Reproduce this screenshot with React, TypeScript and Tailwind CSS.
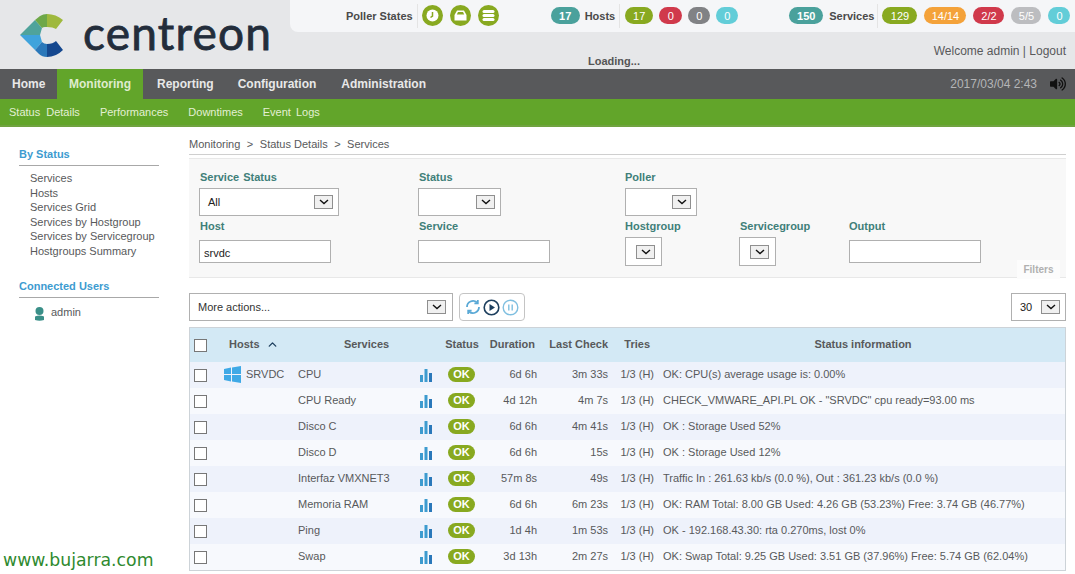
import { ChevronUp } from "lucide-react";
import { FaVolumeUp } from "react-icons/fa";

const rows = [
  { service: "CPU", duration: "6d 6h", check: "3m 33s", info: "OK: CPU(s) average usage is: 0.00%", host: true },
  { service: "CPU Ready", duration: "4d 12h", check: "4m 7s", info: 'CHECK_VMWARE_API.PL OK - "SRVDC" cpu ready=93.00 ms' },
  { service: "Disco C", duration: "6d 6h", check: "4m 41s", info: "OK : Storage Used 52%" },
  { service: "Disco D", duration: "6d 6h", check: "15s", info: "OK : Storage Used 12%" },
  { service: "Interfaz VMXNET3", duration: "57m 8s", check: "49s", info: "Traffic In : 261.63 kb/s (0.0 %), Out : 361.23 kb/s (0.0 %)" },
  { service: "Memoria RAM", duration: "6d 6h", check: "6m 23s", info: "OK: RAM Total: 8.00 GB Used: 4.26 GB (53.23%) Free: 3.74 GB (46.77%)" },
  { service: "Ping", duration: "1d 4h", check: "1m 53s", info: "OK - 192.168.43.30: rta 0.270ms, lost 0%" },
  { service: "Swap", duration: "3d 13h", check: "2m 27s", info: "OK: Swap Total: 9.25 GB Used: 3.51 GB (37.96%) Free: 5.74 GB (62.04%)" },
];

function Logo() {
  return (
    <svg width="44" height="44" viewBox="0 0 44 44" className="shrink-0">
      <path d="M0 21 L15 6 L22 14 L20 21 Z" fill="#4fa39b" />
      <path d="M15 6 L20 2 Q23 0 27 0 L27 13 L25 13 Q23 13 22 14 Z" fill="#6ea848" />
      <path d="M27 0 Q36 0 43 6 L36 15 Q33 13 27 13 Z" fill="#9fb93d" />
      <path d="M0 21 L20 21 L22 28 L15 36 Z" fill="#3fa3dc" />
      <path d="M15 36 L22 28 Q24 30 27 30 L27 43 Q22 43 19 40 Z" fill="#2a78ba" />
      <path d="M27 30 Q33 30 36 27 L43 36 Q36 43 27 43 Z" fill="#15488f" />
    </svg>
  );
}

function Round({ children }: { children: React.ReactNode }) {
  return <span className="flex h-[21px] w-[21px] items-center justify-center rounded-full bg-[#88a920]">{children}</span>;
}

function Pill({ color, w, bold, children }: { color: string; w: string; bold?: boolean; children: React.ReactNode }) {
  return <span className={`flex h-[17px] items-center justify-center rounded-full text-[11px] text-white ${bold ? "font-bold" : "font-normal"} ${color} ${w}`}>{children}</span>;
}

function SelectBox({ className, value }: { className: string; value?: string }) {
  return (
    <div className={`flex items-center justify-between border border-[#b0b0b0] bg-white text-[11px] font-normal text-[#222] ${className}`}>
      <span>{value}</span>
      <span className="flex h-[14px] w-[19px] items-center justify-center border border-[#8f8f8f] bg-[#f0f0f0]">
        <svg width="10" height="6" viewBox="0 0 10 6"><path d="M1 1 L5 4.5 L9 1" fill="none" stroke="#111" strokeWidth="1.4" /></svg>
      </span>
    </div>
  );
}

function Bars() {
  return (
    <svg width="12" height="13" viewBox="0 0 12 13">
      <rect x="0" y="6" width="3" height="7" fill="#3d9bcf" />
      <rect x="4.5" y="0" width="3" height="13" fill="#3d9bcf" />
      <rect x="9" y="4" width="3" height="9" fill="#2a78ba" />
    </svg>
  );
}

function WinIcon() {
  return (
    <svg width="17" height="17" viewBox="0 0 17 17">
      <path d="M0 3 L7 1.6 V8 H0 Z M8 1.4 L17 0 V8 H8 Z M0 9 H7 V15.4 L0 14 Z M8 9 H17 V17 L8 15.6 Z" fill="#3fa9e6" />
    </svg>
  );
}

function Check() {
  return <span className="block h-[13px] w-[13px] border border-[#777] bg-white" />;
}

export default function App() {
  return (
    <div className="relative h-[574px] w-[1075px] overflow-hidden bg-white font-['Liberation_Sans',Arial,sans-serif] text-[11px] text-[#58595b]">
      {/* cabecera */}
      <header className="flex h-[69px] bg-[#e6e7e9]">
        <div className="flex w-[290px] shrink-0 items-start gap-[19px] pl-[20px] pt-[14px]">
          <Logo />
          <span className="mt-[-4px] font-['Lato',sans-serif] text-[46px] font-normal leading-[46px] tracking-[1.2px] text-[#232d3b] [-webkit-text-stroke:0.8px_#232d3b]">centreon</span>
        </div>
        <div className="flex min-w-0 flex-1 flex-col">
          <div className="flex h-[33px] items-center rounded-bl-lg bg-[#f5f6f8] pl-[56px] font-bold">
            <span className="text-[#4a4a4a]">Poller States</span>
            <span className="ml-[4px] h-[24px] w-px bg-[#e4e4e4]" />
            <div className="ml-[4px] flex gap-[7px]">
              <Round>
                <svg width="13" height="13" viewBox="0 0 13 13"><circle cx="6.5" cy="6.5" r="6" fill="#fff" /><path d="M6.5 3 V7 L4.5 8.5" fill="none" stroke="#88a920" strokeWidth="1.5" /></svg>
              </Round>
              <Round>
                <svg width="13" height="11" viewBox="0 0 13 11"><path d="M3 .5 H10 L12.5 5 V10.5 H.5 V5 Z" fill="#fff" /><path d="M4 2 H9 L10.2 4.6 H2.8 Z" fill="#88a920" /></svg>
              </Round>
              <Round>
                <svg width="13" height="13" viewBox="0 0 13 13"><rect x=".5" y="1" width="12" height="3" rx="1.5" fill="#fff" /><rect x=".5" y="5" width="12" height="3" rx="1.5" fill="#fff" /><rect x=".5" y="9" width="12" height="3" rx="1.5" fill="#fff" /></svg>
              </Round>
            </div>
            <div className="ml-[52px] flex items-center">
              <Pill bold color="bg-[#4aa19c]" w="w-[29px]">17</Pill>
              <span className="ml-[5px] text-[#4a4a4a]">Hosts</span>
              <span className="ml-[4px] h-[24px] w-px bg-[#e4e4e4]" />
              <div className="ml-[5px] flex gap-[6px]">
                <Pill color="bg-[#88a920]" w="w-[28px]">17</Pill>
                <Pill color="bg-[#d0394b]" w="w-[23px]">0</Pill>
                <Pill color="bg-[#818285]" w="w-[22px]">0</Pill>
                <Pill color="bg-[#62cdd8]" w="w-[22px]">0</Pill>
              </div>
            </div>
            <div className="ml-[51px] flex items-center">
              <Pill bold color="bg-[#4aa19c]" w="w-[34px]">150</Pill>
              <span className="ml-[6px] text-[#4a4a4a]">Services</span>
              <span className="ml-[3px] h-[24px] w-px bg-[#e4e4e4]" />
              <div className="ml-[4px] flex gap-[7px]">
                <Pill color="bg-[#88a920]" w="w-[35px]">129</Pill>
                <Pill color="bg-[#f4a23a]" w="w-[42px]">14/14</Pill>
                <Pill color="bg-[#d0394b]" w="w-[31px]">2/2</Pill>
                <Pill color="bg-[#bcbdc0]" w="w-[30px]">5/5</Pill>
                <Pill color="bg-[#62cdd8]" w="w-[22px]">0</Pill>
              </div>
            </div>
          </div>
          <div className="flex flex-1 justify-between pl-[298px] pr-[9px] text-[12px]">
            <span className="mt-[21px] text-[11px] font-bold text-[#555]">Loading...</span>
            <span className="mt-[10px]">Welcome admin | Logout</span>
          </div>
        </div>
      </header>

      {/* menu principal */}
      <nav className="flex h-[30px] items-stretch bg-[#58595b] text-[12px] font-bold text-[#e8e8e8]">
        <span className="flex w-[57px] items-center pl-[12px]">Home</span>
        <span className="flex w-[86px] items-center justify-center bg-[#62a52a] text-[#dfeccf]">Monitoring</span>
        <span className="ml-[14px] flex items-center">Reporting</span>
        <span className="ml-[24px] flex items-center">Configuration</span>
        <span className="ml-[25px] flex items-center">Administration</span>
        <span className="ml-auto flex items-center pr-[9px] font-normal text-[#b4b5b7]">
          2017/03/04 2:43
          <FaVolumeUp className="ml-[13px] text-[16px] text-[#111]" />
        </span>
      </nav>
      <div className="flex h-[28px] items-center gap-[20px] border-b-2 border-[#70a340] bg-[#62a52a] pl-[9px] text-[11px] text-[#e4f0d4]">
        <span className="[word-spacing:3px]">Status Details</span>
        <span>Performances</span>
        <span>Downtimes</span>
        <span className="[word-spacing:2px]">Event Logs</span>
      </div>

      <div className="flex">
        {/* lateral */}
        <aside className="w-[189px] shrink-0 pl-[19px] pr-[30px] pt-[21px]">
          <h3 className="border-b border-[#a8a8a8] pb-[4px] font-bold leading-[13px] text-[#3d9bd0]">By Status</h3>
          <ul className="mt-[5px] pl-[11px] leading-[14.6px]">
            <li>Services</li>
            <li>Hosts</li>
            <li>Services Grid</li>
            <li>Services by Hostgroup</li>
            <li>Services by Servicegroup</li>
            <li>Hostgroups Summary</li>
          </ul>
          <h3 className="mt-[21px] border-b border-[#a8a8a8] pb-[4px] font-bold leading-[13px] text-[#3d9bd0]">Connected Users</h3>
          <div className="mt-[6px] flex items-center gap-[6px] pl-[15px]">
            <svg width="11" height="14" viewBox="0 0 11 14" className="mt-[3px]"><circle cx="5.5" cy="4" r="4" fill="#3a8f88" /><path d="M1 9.5 Q5.5 7.5 10 9.5 V13 Q5.5 14.5 1 13 Z" fill="#3a8f88" /></svg>
            <span>admin</span>
          </div>
        </aside>

        {/* contenido */}
        <main className="w-[877px] shrink-0">
          <div className="flex h-[28px] items-end gap-[6.5px] border-b border-[#cfcfcf] pb-[2px]">
            <span>Monitoring</span>
            <span>&gt;</span>
            <span>Status Details</span>
            <span>&gt;</span>
            <span>Services</span>
          </div>

          <section className="relative mt-[3px] h-[120px] border-y border-y-[#e8e8e8] bg-[#f8f8f8] pl-[10px] pt-[12px]">
            <div className="grid grid-cols-[219px_207px_114px_110px_1fr] font-bold text-[#3f7f79]">
              <div className="h-[47px]">
                <div className="pl-[1px] leading-[13px] [word-spacing:1px]">Service Status</div>
                <SelectBox className="mt-[4px] h-[28px] w-[140px] pl-[8px] pr-[5px]" value="All" />
              </div>
              <div>
                <div className="pl-[1px] leading-[13px]">Status</div>
                <SelectBox className="mt-[4px] h-[28px] w-[83px] pl-[8px] pr-[5px]" />
              </div>
              <div className="col-span-3">
                <div className="leading-[13px]">Poller</div>
                <SelectBox className="mt-[4px] h-[28px] w-[72px] pl-[8px] pr-[5px]" />
              </div>
              <div className="mt-[2px]">
                <div className="pl-[1px] leading-[13px]">Host</div>
                <input readOnly value="srvdc" className="mt-[7px] h-[23px] w-[132px] border border-[#b0b0b0] bg-white px-[4px] pt-[2px] text-[11px] font-normal text-[#222]" />
              </div>
              <div className="mt-[2px]">
                <div className="pl-[1px] leading-[13px]">Service</div>
                <input readOnly className="mt-[7px] h-[23px] w-[132px] border border-[#b0b0b0] bg-white" />
              </div>
              <div className="mt-[2px]">
                <div className="leading-[13px]">Hostgroup</div>
                <SelectBox className="mt-[4px] h-[29px] w-[37px] justify-end pr-[6px]" />
              </div>
              <div className="mt-[2px]">
                <div className="pl-[1px] leading-[13px]">Servicegroup</div>
                <SelectBox className="mt-[4px] h-[29px] w-[37px] justify-end pr-[6px]" />
              </div>
              <div className="mt-[2px]">
                <div className="leading-[13px]">Output</div>
                <input readOnly className="mt-[7px] h-[23px] w-[132px] border border-[#b0b0b0] bg-white" />
              </div>
            </div>
            <span className="absolute bottom-[-2px] right-[6px] flex h-[19px] w-[43px] items-center justify-center bg-[#fcfcfc] text-[10px] font-bold text-[#b0b0b0]">Filters</span>
          </section>

          <div className="mt-[15px] flex h-[28px] items-stretch">
            <SelectBox className="w-[264px] pl-[8px] pr-[6px] text-[#333]" value="More actions..." />
            <div className="ml-[6px] flex w-[66px] items-center justify-center gap-[2px] rounded-[4px] border border-[#c4c4c4]">
              <svg width="16" height="16" viewBox="0 0 16 16" fill="none" stroke="#5aa9d6" strokeWidth="1.8">
                <path d="M2 8 A6 6 0 0 1 12 3.5 M14 8 A6 6 0 0 1 4 12.5" />
                <path d="M12.8 1 V4.4 H9.4 M3.2 15 V11.6 H6.6" />
              </svg>
              <svg width="17" height="17" viewBox="0 0 17 17">
                <circle cx="8.5" cy="8.5" r="7.3" fill="none" stroke="#1d3f5e" strokeWidth="1.6" />
                <path d="M6.5 5 L12 8.5 L6.5 12 Z" fill="#1d3f5e" />
              </svg>
              <svg width="17" height="17" viewBox="0 0 17 17" fill="none" stroke="#7fbfe0" strokeWidth="1.4">
                <circle cx="8.5" cy="8.5" r="7.3" />
                <path d="M6.8 5.5 V11.5 M10.2 5.5 V11.5" />
              </svg>
            </div>
            <SelectBox className="ml-auto w-[55px] pl-[8px] pr-[5px]" value="30" />
          </div>

          <table className="mt-[6px] w-[877px] table-fixed border-separate border-spacing-0 border border-[#cdd3d8] text-[11px]">
            <colgroup>
              <col className="w-[32px]" />
              <col className="w-[76px]" />
              <col className="w-[117px]" />
              <col className="w-[25px]" />
              <col className="w-[44px]" />
              <col className="w-[58px]" />
              <col className="w-[72px]" />
              <col className="w-[44px]" />
              <col />
            </colgroup>
            <thead>
              <tr className="h-[34px] bg-[#d3e9f5] font-bold">
                <th className="pl-[4px]"><Check /></th>
                <th className="pb-[2px] pl-[7px] text-left font-bold">
                  <span className="inline-flex items-center gap-[6px]">Hosts <ChevronUp size={13} strokeWidth={2.5} className="text-[#1d3f5e]" /></span>
                </th>
                <th colSpan={2} className="pb-[2px] pr-[5px] font-bold">Services</th>
                <th className="pb-[2px] font-bold">Status</th>
                <th className="pb-[2px] pr-[7px] text-right font-bold">Duration</th>
                <th className="pb-[2px] pr-[6px] text-right font-bold">Last Check</th>
                <th className="pb-[2px] pr-[8px] text-right font-bold">Tries</th>
                <th className="pb-[2px] pl-[3px] font-bold">Status information</th>
              </tr>
            </thead>
            <tbody>
              {rows.map((r, i) => (
                <tr key={r.service} className={`h-[26px] ${i % 2 === 0 ? "bg-[#eef2fb]" : "bg-[#f7f9fd]"}`}>
                  <td className="pl-[4px]"><Check /></td>
                  <td className="pl-[2px] pb-[1px]">
                    {r.host && (
                      <span className="flex items-center gap-[5px]">
                        <WinIcon />
                        SRVDC
                      </span>
                    )}
                  </td>
                  <td className="pb-[2px] whitespace-nowrap">{r.service}</td>
                  <td className="pl-[5px] align-middle"><Bars /></td>
                  <td className="pb-[2px] pr-[1px]">
                    <span className="mx-auto flex h-[15px] w-[27px] items-center justify-center rounded-full bg-[#88a920] text-[11px] font-bold text-white">OK</span>
                  </td>
                  <td className="pb-[2px] pr-[5px] text-right whitespace-nowrap">{r.duration}</td>
                  <td className="pb-[2px] pr-[6px] text-right whitespace-nowrap">{r.check}</td>
                  <td className="pb-[2px] pr-[4px] text-right whitespace-nowrap">1/3 (H)</td>
                  <td className="pb-[2px] pl-[5px] whitespace-nowrap">{r.info}</td>
                </tr>
              ))}
            </tbody>
          </table>
        </main>
      </div>

      <span className="absolute bottom-[4px] left-[3px] font-['DejaVu_Sans',sans-serif] text-[17.3px] leading-[20px] text-[#2f8a2f]">www.bujarra.com</span>
    </div>
  );
}
